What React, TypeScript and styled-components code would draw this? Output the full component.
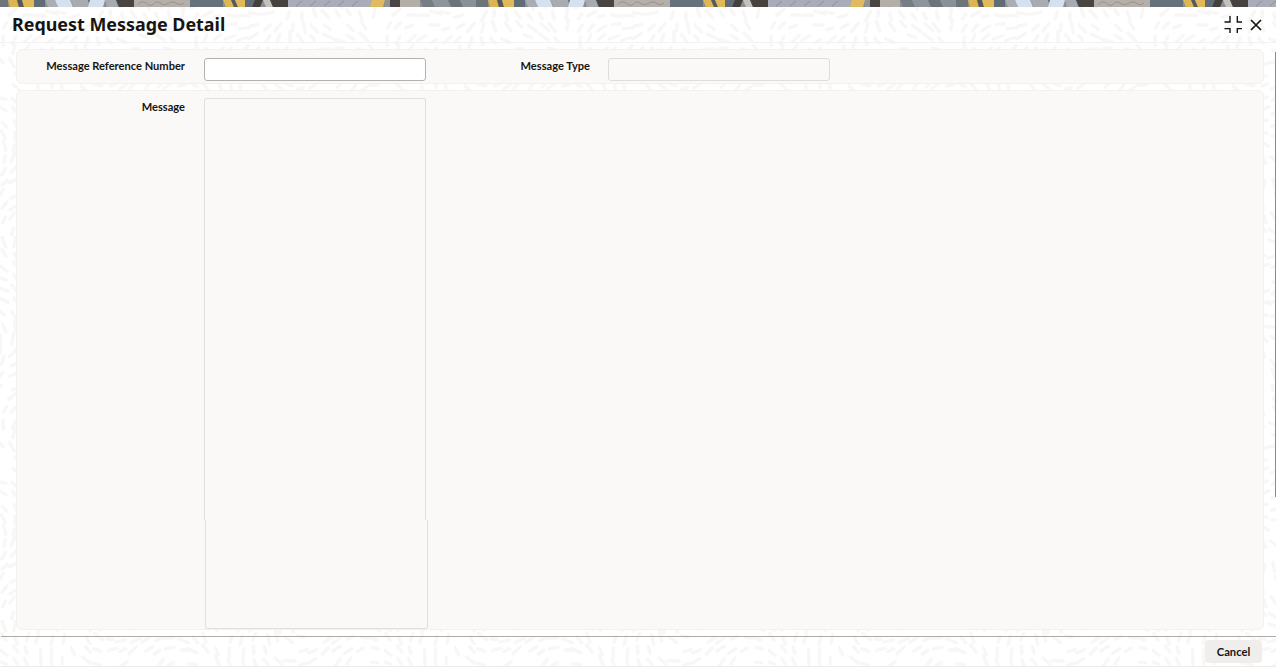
import React from "react";
import styled, { createGlobalStyle } from "styled-components";

/* Seeded pattern of short rounded dashes following a soft flow field */
function buildPattern(): string {
  const size = 384;
  const step = 12;
  let seed = 4242;
  const rnd = () => {
    seed = (seed * 1664525 + 1013904223) % 4294967296;
    return seed / 4294967296;
  };
  let lines = "";
  for (let y = 0; y < size; y += step) {
    for (let x = 0; x < size; x += step) {
      if (rnd() < 0.12) continue;
      const px = x + rnd() * 5;
      const py = y + rnd() * 5;
      const a =
        Math.sin((px / size) * Math.PI * 4) * 1.2 +
        Math.cos((py / size) * Math.PI * 4) * 1.0 +
        1.2 +
        (rnd() - 0.5) * 0.3;
      const len = 3 + rnd() * 2.5;
      const dx = Math.cos(a) * len;
      const dy = Math.sin(a) * len;
      lines += `<line x1='${(px - dx).toFixed(1)}' y1='${(py - dy).toFixed(1)}' x2='${(px + dx).toFixed(1)}' y2='${(py + dy).toFixed(1)}'/>`;
    }
  }
  const svg = `<svg xmlns='http://www.w3.org/2000/svg' width='${size}' height='${size}'><g stroke='#f8f7f5' stroke-width='3.4' stroke-linecap='round'>${lines}</g></svg>`;
  return `url("data:image/svg+xml,${encodeURIComponent(svg)}")`;
}

const pattern = buildPattern();

const GlobalStyle = createGlobalStyle`
  html, body { margin: 0; padding: 0; background: #fff; }
  * { box-sizing: border-box; }
`;

const Page = styled.div`
  position: relative;
  width: 1276px;
  height: 667px;
  overflow: hidden;
  display: flex;
  flex-direction: column;
  font-family: Lato, "Noto Sans", sans-serif;
  color: #161513;
  background-color: #fff;
  background-image: ${pattern};
`;

const BannerArt = styled.svg`
  display: block;
  flex: none;
  width: 1276px;
  height: 7px;
`;

const Header = styled.header`
  flex: none;
  height: 36px;
  display: flex;
  align-items: center;
  justify-content: space-between;
  padding: 0 14px 0 12px;
  border-bottom: 1px solid #f3f2f0;
`;

const Title = styled.h1`
  margin: 0 0 1px;
  font-family: "Noto Sans", Lato, sans-serif;
  font-size: 17.9px;
  font-weight: 700;
  line-height: 24px;
  letter-spacing: 0;
`;

const WindowActions = styled.div`
  display: flex;
  align-items: center;
  gap: 8px;
`;

const IconButton = styled.span`
  display: block;
  line-height: 0;
`;

const Content = styled.main`
  flex: none;
  padding: 6px 12px 0 16px;
  display: flex;
  flex-direction: column;
  gap: 6px;
`;

const Panel = styled.section<{ $height: number; $padTop: number }>`
  height: ${(p) => p.$height}px;
  background: #faf9f7;
  border: 1px solid #f2f1ef;
  border-radius: 6px;
  padding: ${(p) => p.$padTop}px 0 0 0;
  display: flex;
  align-items: flex-start;
`;

const Label = styled.label<{ $width: number }>`
  flex: none;
  width: ${(p) => p.$width}px;
  margin-right: 18px;
  text-align: right;
  font-size: 11.1px;
  font-weight: 700;
  line-height: 16px;
  white-space: nowrap;
`;

const LeftLabel = styled(Label)`
  margin-right: 19px;
`;

const MessageLabel = styled(LeftLabel)`
  margin-top: 1px;
`;

const TextField = styled.input<{ $readOnly?: boolean }>`
  flex: none;
  width: 222px;
  height: 23px;
  padding: 0 8px;
  background: ${(p) => (p.$readOnly ? "#faf9f7" : "#fff")};
  border: 1px solid ${(p) => (p.$readOnly ? "#dfddda" : "#b4b2ae")};
  border-radius: 3px;
  outline: none;
`;

const MessageBox = styled.div`
  flex: none;
  width: 224px;
  display: flex;
  flex-direction: column;
`;

const MessageUpper = styled.div`
  width: 222px;
  height: 422px;
  border: 1px solid #e2e0dd;
  border-bottom: 0;
  border-radius: 3px 3px 0 0;
`;

const MessageLower = styled.div`
  width: 223px;
  height: 109px;
  margin-left: 1px;
  border: 1px solid #e2e0dd;
  border-top: 0;
  border-radius: 0 0 3px 3px;
`;

const Footer = styled.footer`
  position: absolute;
  left: 1px;
  right: 0;
  bottom: 0;
  height: 31px;
  border-top: 1px solid #aeaca8;
  border-bottom: 1px solid #ecebe9;
  display: flex;
  align-items: flex-start;
  justify-content: flex-end;
  padding: 3px 14px 0 0;
`;

const CancelButton = styled.button`
  width: 57px;
  height: 23px;
  padding: 0;
  border: 0;
  border-radius: 4px;
  background: #efeeec;
  color: #161513;
  font-family: inherit;
  font-size: 11.2px;
  font-weight: 700;
  line-height: 23px;
`;

const ScrollTrack = styled.div`
  position: absolute;
  top: 52px;
  right: 0;
  width: 1.5px;
  height: 445px;
  background: #8c8b88;
`;

type Band = [number, number, string, number?];

/* x, width, fill, slant: one period (480px) of the banner */
const bands: Band[] = [
  [-4, 12, "#6d747a"],
  [8, 9, "#dcb552", 2],
  [17, 5, "#55595c", 2],
  [22, 12, "#dfb95a", 2],
  [34, 11, "#616c76"],
  [45, 10, "#a9aeb4", 3],
  [55, 15, "#d6e1ee", 3],
  [70, 18, "#a7abb2", 4],
  [88, 2, "#63676b", 2],
  [90, 15, "#d5e1ee", -2],
  [105, 11, "#a6abb3", 2],
  [116, 18, "#4a4541", 3],
  [134, 56, "#b4b0a9"],
  [190, 33, "#66717b"],
  [223, 8, "#dfb656", 3],
  [231, 4, "#575b5e", 3],
  [235, 10, "#e0b95a", 3],
  [245, 10, "#626d77"],
  [255, 8, "#45403c", -3],
  [263, 7, "#c4c2bc", 3],
  [270, 18, "#47423e", 3],
  [288, 84, "#a8adb8"],
  [372, 13, "#dfba5e", -2],
  [385, 5, "#8f939a"],
  [390, 10, "#4a4541"],
  [400, 20, "#b3afa8"],
  [420, 12, "#777d83", 3],
  [432, 16, "#8e949b", 3],
  [448, 12, "#6c747b", 3],
  [460, 20, "#8a9097", 3],
];

const periods = [0, 480, 960];

const Banner = () => (
  <BannerArt viewBox="0 0 1276 7" preserveAspectRatio="none" aria-hidden="true">
    <rect width="1276" height="7" fill="#8a8f95" />
    {periods.map((off) => (
      <g key={off}>
        {bands.map(([x, w, fill, s = 0]) => (
          <polygon
            key={x}
            points={`${off + x},0 ${off + x + w},0 ${off + x + w + s},7 ${off + x + s},7`}
            fill={fill}
          />
        ))}
        <path
          d={`M${off + 138} 5c4-6 8-2 11 0s6-4 9-3 5 4 9 2 6-3 9-1 5 2 8 0`}
          fill="none"
          stroke="#98948d"
          strokeWidth="1"
        />
        <path
          d={`M${off + 296} 6l6-5M${off + 310} 6l6-5M${off + 324} 6l6-5M${off + 338} 6l6-5M${off + 352} 6l6-5`}
          fill="none"
          stroke="#8b909b"
          strokeWidth="1"
        />
      </g>
    ))}
  </BannerArt>
);

const CollapseIcon = () => (
  <svg width="18" height="18" viewBox="0 0 18 18" fill="none" stroke="#161513" strokeWidth="1.4">
    <path d="M0.5 6H6V0" />
    <path d="M13.3 0V6H18" />
    <path d="M0.5 12.6H6V17" />
    <path d="M13.3 17V12.6H18" />
  </svg>
);

const CloseIcon = () => (
  <svg width="12" height="12" viewBox="0 0 12 12" fill="none" stroke="#161513" strokeWidth="1.7">
    <path d="M1 1L11 11M11 1L1 11" />
  </svg>
);

export default function App() {
  return (
    <Page>
      <GlobalStyle />
      <Banner />
      <Header>
        <Title>Request Message Detail</Title>
        <WindowActions>
          <IconButton>
            <CollapseIcon />
          </IconButton>
          <IconButton>
            <CloseIcon />
          </IconButton>
        </WindowActions>
      </Header>
      <Content>
        <Panel $height={35} $padTop={8}>
          <LeftLabel $width={168}>Message Reference Number</LeftLabel>
          <TextField />
          <Label $width={164}>Message Type</Label>
          <TextField $readOnly readOnly />
        </Panel>
        <Panel $height={540} $padTop={7}>
          <MessageLabel $width={168}>Message</MessageLabel>
          <MessageBox>
            <MessageUpper />
            <MessageLower />
          </MessageBox>
        </Panel>
      </Content>
      <ScrollTrack />
      <Footer>
        <CancelButton>Cancel</CancelButton>
      </Footer>
    </Page>
  );
}
